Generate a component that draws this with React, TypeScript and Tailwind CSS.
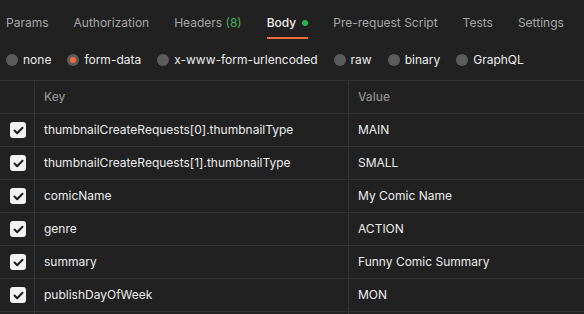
import React from "react";

const tabs = [
  { label: "Params" },
  { label: "Authorization" },
  { label: "Headers", count: "(8)" },
  { label: "Body", active: true },
  { label: "Pre-request Script" },
  { label: "Tests" },
  { label: "Settings" },
];

const radios = ["none", "form-data", "x-www-form-urlencoded", "raw", "binary", "GraphQL"];

const rows = [
  ["thumbnailCreateRequests[0].thumbnailType", "MAIN"],
  ["thumbnailCreateRequests[1].thumbnailType", "SMALL"],
  ["comicName", "My Comic Name"],
  ["genre", "ACTION"],
  ["summary", "Funny Comic Summary"],
  ["publishDayOfWeek", "MON"],
  ["", ""],
];

function Check() {
  return (
    <div className="w-4 h-4 rounded-[3px] bg-[#f2f2f2] flex items-center justify-center">
      <svg width="11" height="9" viewBox="0 0 11 9" fill="none">
        <path d="M1.5 4.5 L4.2 7.2 L9.5 1.8" stroke="#1e1e1e" strokeWidth="2" strokeLinecap="round" strokeLinejoin="round" />
      </svg>
    </div>
  );
}

export default function App() {
  return (
    <div
      className="w-[584px] h-[314px] overflow-hidden bg-[#212121] text-[12px]"
      style={{ fontFamily: "Inter, 'Noto Sans', sans-serif" }}
    >
      <div className="flex h-[40px] pl-[6px] gap-[25px] whitespace-nowrap">
        {tabs.map((t) => (
          <div key={t.label} className="relative flex items-center h-full pt-[6px] shrink-0">
            <span className={t.active ? "text-[#f0f0f0] font-medium" : "text-[#a6a6a6]"}>
              {t.label}
              {t.count && <span className="text-[#49b05b]"> {t.count}</span>}
            </span>
            {t.active && <span className="ml-[6px] w-[6px] h-[6px] rounded-full bg-[#1eb84d]" />}
            {t.active && <span className="absolute left-0 right-0 bottom-[1px] h-[2px] bg-[#f26b3a]" />}
          </div>
        ))}
      </div>
      <div className="flex items-center h-[40px] pl-[6px] gap-[16px] text-[#ececec] whitespace-nowrap">
        {radios.map((r) => (
          <div key={r} className="flex items-center gap-[5px] shrink-0">
            {r === "form-data" ? (
              <span className="w-3 h-3 rounded-full bg-[#5c5c5c] flex items-center justify-center">
                <span className="w-[6px] h-[6px] rounded-full bg-[#f26b3a]" />
              </span>
            ) : (
              <span className="w-3 h-3 rounded-full bg-[#5c5c5c]" />
            )}
            <span>{r}</span>
          </div>
        ))}
      </div>
      <div className="border-t border-[#333333]">
        <div className="grid grid-cols-[35px_314px_1fr] h-[33px] border-b border-[#333333]">
          <div className="border-r border-[#333333]" />
          <div className="border-r border-[#333333] flex items-center pl-[9px] text-[#8e8e8e] font-medium">Key</div>
          <div className="flex items-center pl-[9px] text-[#8e8e8e] font-medium">Value</div>
        </div>
        {rows.map(([k, v], i) => (
          <div key={i} className="grid grid-cols-[35px_314px_1fr] h-[33px] border-b border-[#333333]">
            <div className="border-r border-[#333333] flex items-center justify-center pl-[2px]">
              {k && <Check />}
            </div>
            <div className="border-r border-[#333333] flex items-center pl-[9px] text-[#ececec]">{k}</div>
            <div className="flex items-center pl-[9px] text-[#ececec]">{v}</div>
          </div>
        ))}
      </div>
    </div>
  );
}
